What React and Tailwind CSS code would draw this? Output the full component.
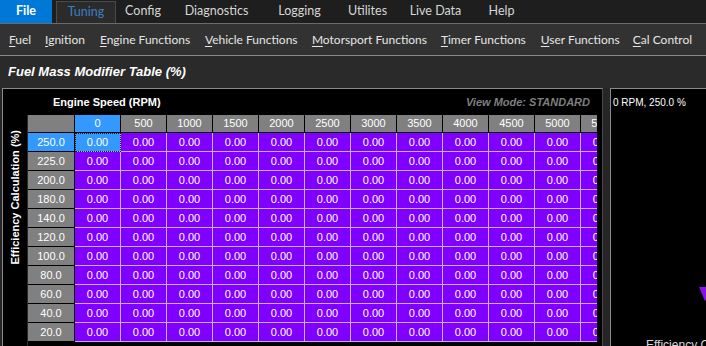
import React from "react";

const tabs = [
    { label: "Config", w: "w-[54px]" },
    { label: "Diagnostics", w: "w-[93px]" },
    { label: "Logging", w: "w-[73px]" },
    { label: "Utilites", w: "w-[63px]" },
    { label: "Live Data", w: "w-[73px]" },
    { label: "Help", w: "w-[59px]" },
];

const menu = [
    { key: "F", rest: "uel", w: "w-[21px]" },
    { key: "I", rest: "gnition", w: "w-[40px]" },
    { key: "E", rest: "ngine Functions", w: "w-[90px]" },
    { key: "V", rest: "ehicle Functions", w: "w-[92px]" },
    { key: "M", rest: "otorsport Functions", w: "w-[114px]" },
    { key: "T", rest: "imer Functions", w: "w-[85px]" },
    { key: "U", rest: "ser Functions", w: "w-[77px]" },
    { key: "C", rest: "al Control", w: "w-[59px]" },
];

const rpm = [0, 500, 1000, 1500, 2000, 2500, 3000, 3500, 4000, 4500, 5000, 5500];
const loads = ["250.0", "225.0", "200.0", "180.0", "140.0", "120.0", "100.0", "80.0", "60.0", "40.0", "20.0"];

export default function App() {
    return (
        <div className="w-[706px] h-[346px] overflow-hidden bg-[#262626] text-white font-['Liberation_Sans',sans-serif] select-none">
            {/* top tab strip */}
            <div className="flex h-[23px] bg-[#1e1e1e] font-['Lato',sans-serif] text-[12.5px]">
                <div className="w-[52px] flex items-center justify-center bg-[#0078d7] font-bold">File</div>
                <div className="w-[4px]" />
                <div className="w-[60px] mt-[1px] flex items-center justify-center bg-[#2b2b2b] border border-b-0 border-[#4a4a4a] text-[#3a7fc4]">
                    Tuning
                </div>
                {tabs.map((t) => (
                    <div key={t.label} className={`${t.w} flex items-center justify-center text-[#d6d6d6]`}>
                        {t.label}
                    </div>
                ))}
            </div>

            {/* ribbon menu */}
            <div className="flex items-center h-[33px] pl-[9px] gap-[15px] bg-[#323232] border-y border-t-[#6a6a6a] border-b-[#8a8a8a] font-['Lato',sans-serif] text-[12px] text-[#e6e6e6]">
                {menu.map((m) => (
                    <div key={m.key} className={`${m.w} whitespace-nowrap`}>
                        <span className="underline underline-offset-2">{m.key}</span>
                        {m.rest}
                    </div>
                ))}
                <div className="ml-auto mr-[2px] w-px h-[22px] bg-[#9a9a9a]" />
            </div>

            {/* title */}
            <div className="h-[32px] flex items-center pl-[8px] bg-[#2a2a2a] font-bold italic text-[13px] text-white">
                Fuel Mass Modifier Table (%)
            </div>

            <div className="flex h-[258px]">
                {/* main table panel */}
                <div className="w-[601px] bg-black border-l border-t border-r border-l-[#8a8a8a] border-t-[#8a8a8a] border-r-[#4a4a4a] ml-[2px] flex flex-col">
                    <div className="h-[26px] flex items-center pl-[50px] pr-[12px] text-[11px] font-bold">
                        <span>Engine Speed (RPM)</span>
                        <span className="ml-auto italic text-[#7e7e7e]">View Mode: STANDARD</span>
                    </div>
                    <div className="flex flex-1">
                        <div className="w-[25px] h-[165px] flex items-center justify-center">
                            <span className="[writing-mode:vertical-rl] rotate-180 text-[11px] font-bold whitespace-nowrap">
                                Efficiency Calculation (%)
                            </span>
                        </div>
                        <div className="w-[570px] overflow-hidden border-l border-[#2a2a2a] -ml-px">
                            <div className="grid grid-cols-[47px_repeat(12,46px)] grid-rows-[18px_repeat(11,19px)] w-max text-[11px] leading-none">
                                <div className="bg-[#808080] border-r border-b border-black" />
                                {rpm.map((r, i) => (
                                    <div
                                        key={r}
                                        className={`flex items-center justify-center border-r border-b border-black ${i === 0 ? "bg-[#3399ff]" : "bg-[#808080]"}`}
                                    >
                                        {r}
                                    </div>
                                ))}
                                {loads.map((l, ri) => (
                                    <React.Fragment key={l}>
                                        <div
                                            className={`flex items-center justify-center border-r border-b border-black ${ri === 0 ? "bg-[#3399ff]" : "bg-[#808080]"}`}
                                        >
                                            {l}
                                        </div>
                                        {rpm.map((r, ci) => (
                                            <div
                                                key={r}
                                                className={`flex items-center justify-center border-r border-b border-[#c8b0ee] ${
                                                    ri === 0 && ci === 0
                                                        ? "bg-[#3399ff] outline-1 outline-dotted outline-[#1a1a1a] -outline-offset-1"
                                                        : "bg-[#8000ff]"
                                                }`}
                                            >
                                                0.00
                                            </div>
                                        ))}
                                    </React.Fragment>
                                ))}
                            </div>
                        </div>
                    </div>
                </div>

                {/* 3d graph panel */}
                <div className="relative flex-1 ml-[7px] bg-black border-l border-t border-[#8a8a8a] overflow-hidden">
                    <div className="pl-[2px] pt-[6px] text-[10px] text-white whitespace-nowrap">0 RPM, 250.0 %</div>
                    <svg className="absolute left-[88px] top-[198px]" width="10" height="16" viewBox="0 0 10 16">
                        <polygon points="0,0 10,0 10,10 6,14" fill="#8a10f0" />
                    </svg>
                    <div className="absolute left-[35px] top-[247px] text-[12px] text-[#d8d8d8] whitespace-nowrap">Efficiency Calculation</div>
                </div>
            </div>
        </div>
    );
}
